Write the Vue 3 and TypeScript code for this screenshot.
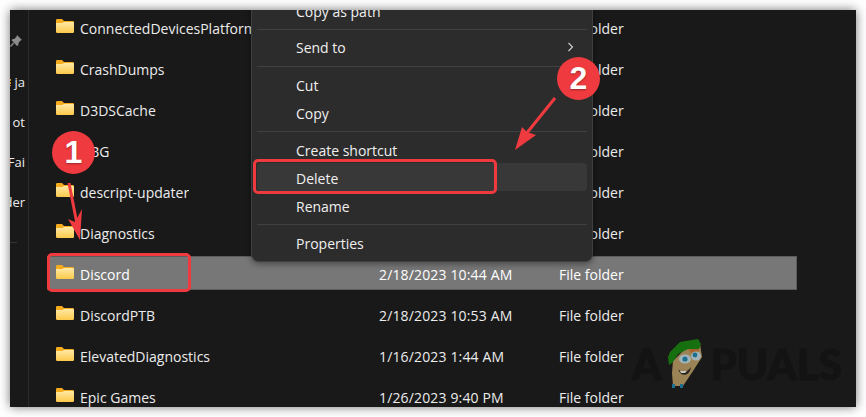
<script setup lang="ts">
interface Row { name: string; date: string; selected?: boolean }
const rows: Row[] = [
  { name: 'ConnectedDevicesPlatform', date: '' },
  { name: 'CrashDumps', date: '' },
  { name: 'D3DSCache', date: '' },
  { name: 'DBG', date: '' },
  { name: 'descript-updater', date: '' },
  { name: 'Diagnostics', date: '' },
  { name: 'Discord', date: '2/18/2023 10:44 AM', selected: true },
  { name: 'DiscordPTB', date: '2/18/2023 10:53 AM' },
  { name: 'ElevatedDiagnostics', date: '1/16/2023 1:44 AM' },
  { name: 'Epic Games', date: '1/26/2023 9:40 PM' },
]
const navItems = ['ja', 'ot', 'Fai', 'der']
</script>

<template>
  <div class="page">
    <div class="window">
      <aside class="nav">
        <svg class="pin" width="14" height="14" viewBox="0 0 14 14">
          <path d="M8 1 L13 6 L11.6 6.6 L9.6 8.8 L9.3 11.2 L8 12 L2.6 6.2 L3.4 5.2 L5.6 4.8 L7.6 2.6 Z" fill="#8c8c8c" />
          <path d="M4.6 9 L1.4 12.6" stroke="#8c8c8c" stroke-width="1.4" />
        </svg>
        <div class="nav-items">
          <div v-for="(item, i) in navItems" :key="item" class="nav-item">
            <span v-if="i === 0" class="tick"></span>
            <span class="nav-text">{{ item }}</span>
          </div>
        </div>
        <div class="nav-rule"></div>
      </aside>

      <main class="list">
        <div v-for="row in rows" :key="row.name" class="row" :class="{ selected: row.selected }">
          <span class="name">
            <svg class="folder" width="18" height="14" viewBox="0 0 18 14">
              <defs>
                <linearGradient id="fb" x1="0" y1="0" x2="0" y2="1">
                  <stop offset="0" stop-color="#ffe9a6" />
                  <stop offset="1" stop-color="#fcc94a" />
                </linearGradient>
              </defs>
              <path d="M0 1.2 Q0 0 1.2 0 H6 L8 2 H16.8 Q18 2 18 3.2 V5 H0 Z" fill="#f5ab1c" />
              <path d="M0 4 H6.2 L8 3 H16.8 Q18 3 18 4.2 V12.8 Q18 14 16.8 14 H1.2 Q0 14 0 12.8 Z" fill="url(#fb)" />
            </svg>
            <span class="label">{{ row.name }}</span>
          </span>
          <span class="date">{{ row.date }}</span>
          <span class="type">File folder</span>
        </div>
      </main>

      <div class="watermark">
        <span class="wm-a">A</span>
        <svg class="mascot" width="36" height="50" viewBox="0 0 36 50">
          <path d="M5 22 L4 34 L5 47 L15 47 L25 32 L34 18 L32 5 L17 10 Z" fill="#9c8356" />
          <path d="M20 10 L31 5 L31 12 L24 15 Z" fill="#a9622c" />
          <path d="M0 18 L2 13 L12 3 L30 0 L33 5 L31 10 L20 10 L10 15 L5 23 L1 26 Z" fill="#17700f" />
          <ellipse cx="17" cy="20" rx="6" ry="4.5" fill="#a3b4b8" />
          <ellipse cx="28" cy="17" rx="5" ry="4.5" fill="#a3b4b8" />
          <circle cx="17" cy="20" r="2.6" fill="#1c6f8f" />
          <circle cx="27" cy="16" r="2.4" fill="#1c6f8f" />
          <path d="M10 30 C14 35 20 33 23 28 C22 37 13 39 10 30 Z" fill="#26241d" />
          <path d="M12 32 L19 32 L17 34 L13 34 Z" fill="#c8c8c0" />
          <path d="M4 45 H7 V49 H4 Z M12 45 H15 V49 H12 Z" fill="#1c6f8f" />
        </svg>
        <span class="wm-rest">PUALS</span>
      </div>

      <div class="menu">
        <div class="mi">Copy as path</div>
        <div class="sep"></div>
        <div class="mi send">
          Send to
          <svg width="7" height="10" viewBox="0 0 7 10"><path d="M1.5 1 L5.5 5 L1.5 9" fill="none" stroke="#d0d0d0" stroke-width="1.1" /></svg>
        </div>
        <div class="sep"></div>
        <div class="mi">Cut</div>
        <div class="mi">Copy</div>
        <div class="sep"></div>
        <div class="mi">Create shortcut</div>
        <div class="mi hover">Delete</div>
        <div class="mi">Rename</div>
        <div class="sep"></div>
        <div class="mi">Properties</div>
      </div>
    </div>

    <div class="mark mark-discord"></div>
    <div class="mark mark-delete"></div>

    <svg class="arrows" width="866" height="417" viewBox="0 0 866 417">
      <path d="M69 183 L77 224" stroke="#ef3b3f" stroke-width="3" fill="none" />
      <path d="M80 240 L68 219 L75 222 L82 209 Z" fill="#ef3b3f" />
      <path d="M555 98 L526 134" stroke="#ef3b3f" stroke-width="3" fill="none" />
      <path d="M515 150 L522 127 L527 132 L536 135 Z" fill="#ef3b3f" />
    </svg>
    <div class="badge badge-1">1</div>
    <div class="badge badge-2">2</div>
  </div>
</template>

<style>
html, body { margin: 0; background: #fff; }
</style>

<style scoped>
.page {
  position: relative;
  width: 866px;
  height: 417px;
  padding: 10px;
  box-sizing: border-box;
  background: #fff;
  overflow: hidden;
  font-family: "Open Sans", "Noto Sans", sans-serif;
}
.window {
  position: relative;
  display: flex;
  height: 397px;
  width: 846px;
  background: #191919;
  color: #ececec;
  overflow: hidden;
  box-shadow: 0 0 10px rgba(0, 0, 0, 0.55);
  font-size: 14px;
}
.nav {
  width: 19px;
  flex: none;
  box-sizing: border-box;
  border-right: 1px solid #2b2b2b;
  padding-top: 24px;
  overflow: hidden;
  margin-right: 18px;
}
.pin { display: block; margin-left: -1px; }
.nav-items { margin-top: 14px; }
.nav-item {
  height: 40px;
  display: flex;
  align-items: center;
  justify-content: flex-end;
  gap: 3px;
  padding-right: 3px;
  white-space: nowrap;
  font-size: 13px;
}
.nav-text { flex: none; }
.tick {
  flex: none;
  width: 2px;
  height: 7px;
  background: repeating-linear-gradient(#d98a1f 0 2px, #191919 2px 3px);
}
.nav-rule { width: 7px; height: 1px; margin-top: 20px; background: #333; }
.list {
  flex: 1;
  display: flex;
  flex-direction: column;
  gap: 7px;
  padding: 0 59px 0 0;
  box-sizing: border-box;
  min-width: 0;
}
.row {
  display: grid;
  grid-template-columns: 323px 180px 1fr;
  align-items: center;
  height: 34px;
  flex: none;
  box-sizing: border-box;
  border: 1px solid transparent;
  padding: 2px 0 0 8px;
}
.row.selected { background: #777; border-color: #5c5c5c; color: #fff; }
.name { display: flex; align-items: center; gap: 6px; min-width: 0; }
.folder { flex: none; margin-top: -4px; }
.label { white-space: nowrap; overflow: hidden; }
.date, .type { white-space: nowrap; }
.date { letter-spacing: 0.15px; }
.menu {
  position: absolute;
  left: 241px;
  bottom: 145px;
  width: 342px;
  box-sizing: border-box;
  padding: 0 5px 5px;
  background: #2c2c2c;
  border: 1px solid #3f3f3f;
  border-top: 0;
  border-radius: 0 0 8px 8px;
  color: #f0f0f0;
  box-shadow: 0 2px 6px rgba(0, 0, 0, 0.4);
}
.mi {
  height: 28px;
  line-height: 31px;
  padding-left: 39px;
  padding-right: 13px;
  border-radius: 4px;
}
.send { display: flex; align-items: center; justify-content: space-between; }
.hover { background: #383838; }
.sep { height: 1px; background: #404040; margin: 5px 0 3px; }
.watermark {
  position: absolute;
  left: 622px;
  top: 329px;
  display: flex;
  align-items: flex-end;
  color: #131313;
  font-family: "Lato", sans-serif;
  font-weight: 900;
  font-size: 42px;
  line-height: 50px;
  -webkit-text-stroke: 1px #131313;
}
.mascot { margin: 0 6px 0 7px; }
.mark {
  position: absolute;
  box-sizing: border-box;
  border: 3px solid #ef3b3f;
  border-radius: 5px;
}
.mark-discord { left: 47px; top: 253px; width: 144px; height: 39px; }
.mark-delete { left: 253px; top: 159px; width: 244px; height: 35px; }
.arrows { position: absolute; left: 0; top: 0; pointer-events: none; }
.badge {
  position: absolute;
  width: 43px;
  height: 43px;
  border-radius: 50%;
  background: #ef3b3f;
  color: #fff;
  font-family: "Liberation Sans", sans-serif;
  font-weight: 700;
  font-size: 32px;
  line-height: 43px;
  text-align: center;
  text-shadow: 0 1px 2px rgba(0, 0, 0, 0.35);
}
.badge-1 { left: 52px; top: 131px; }
.badge-2 { left: 557px; top: 57px; }
</style>
